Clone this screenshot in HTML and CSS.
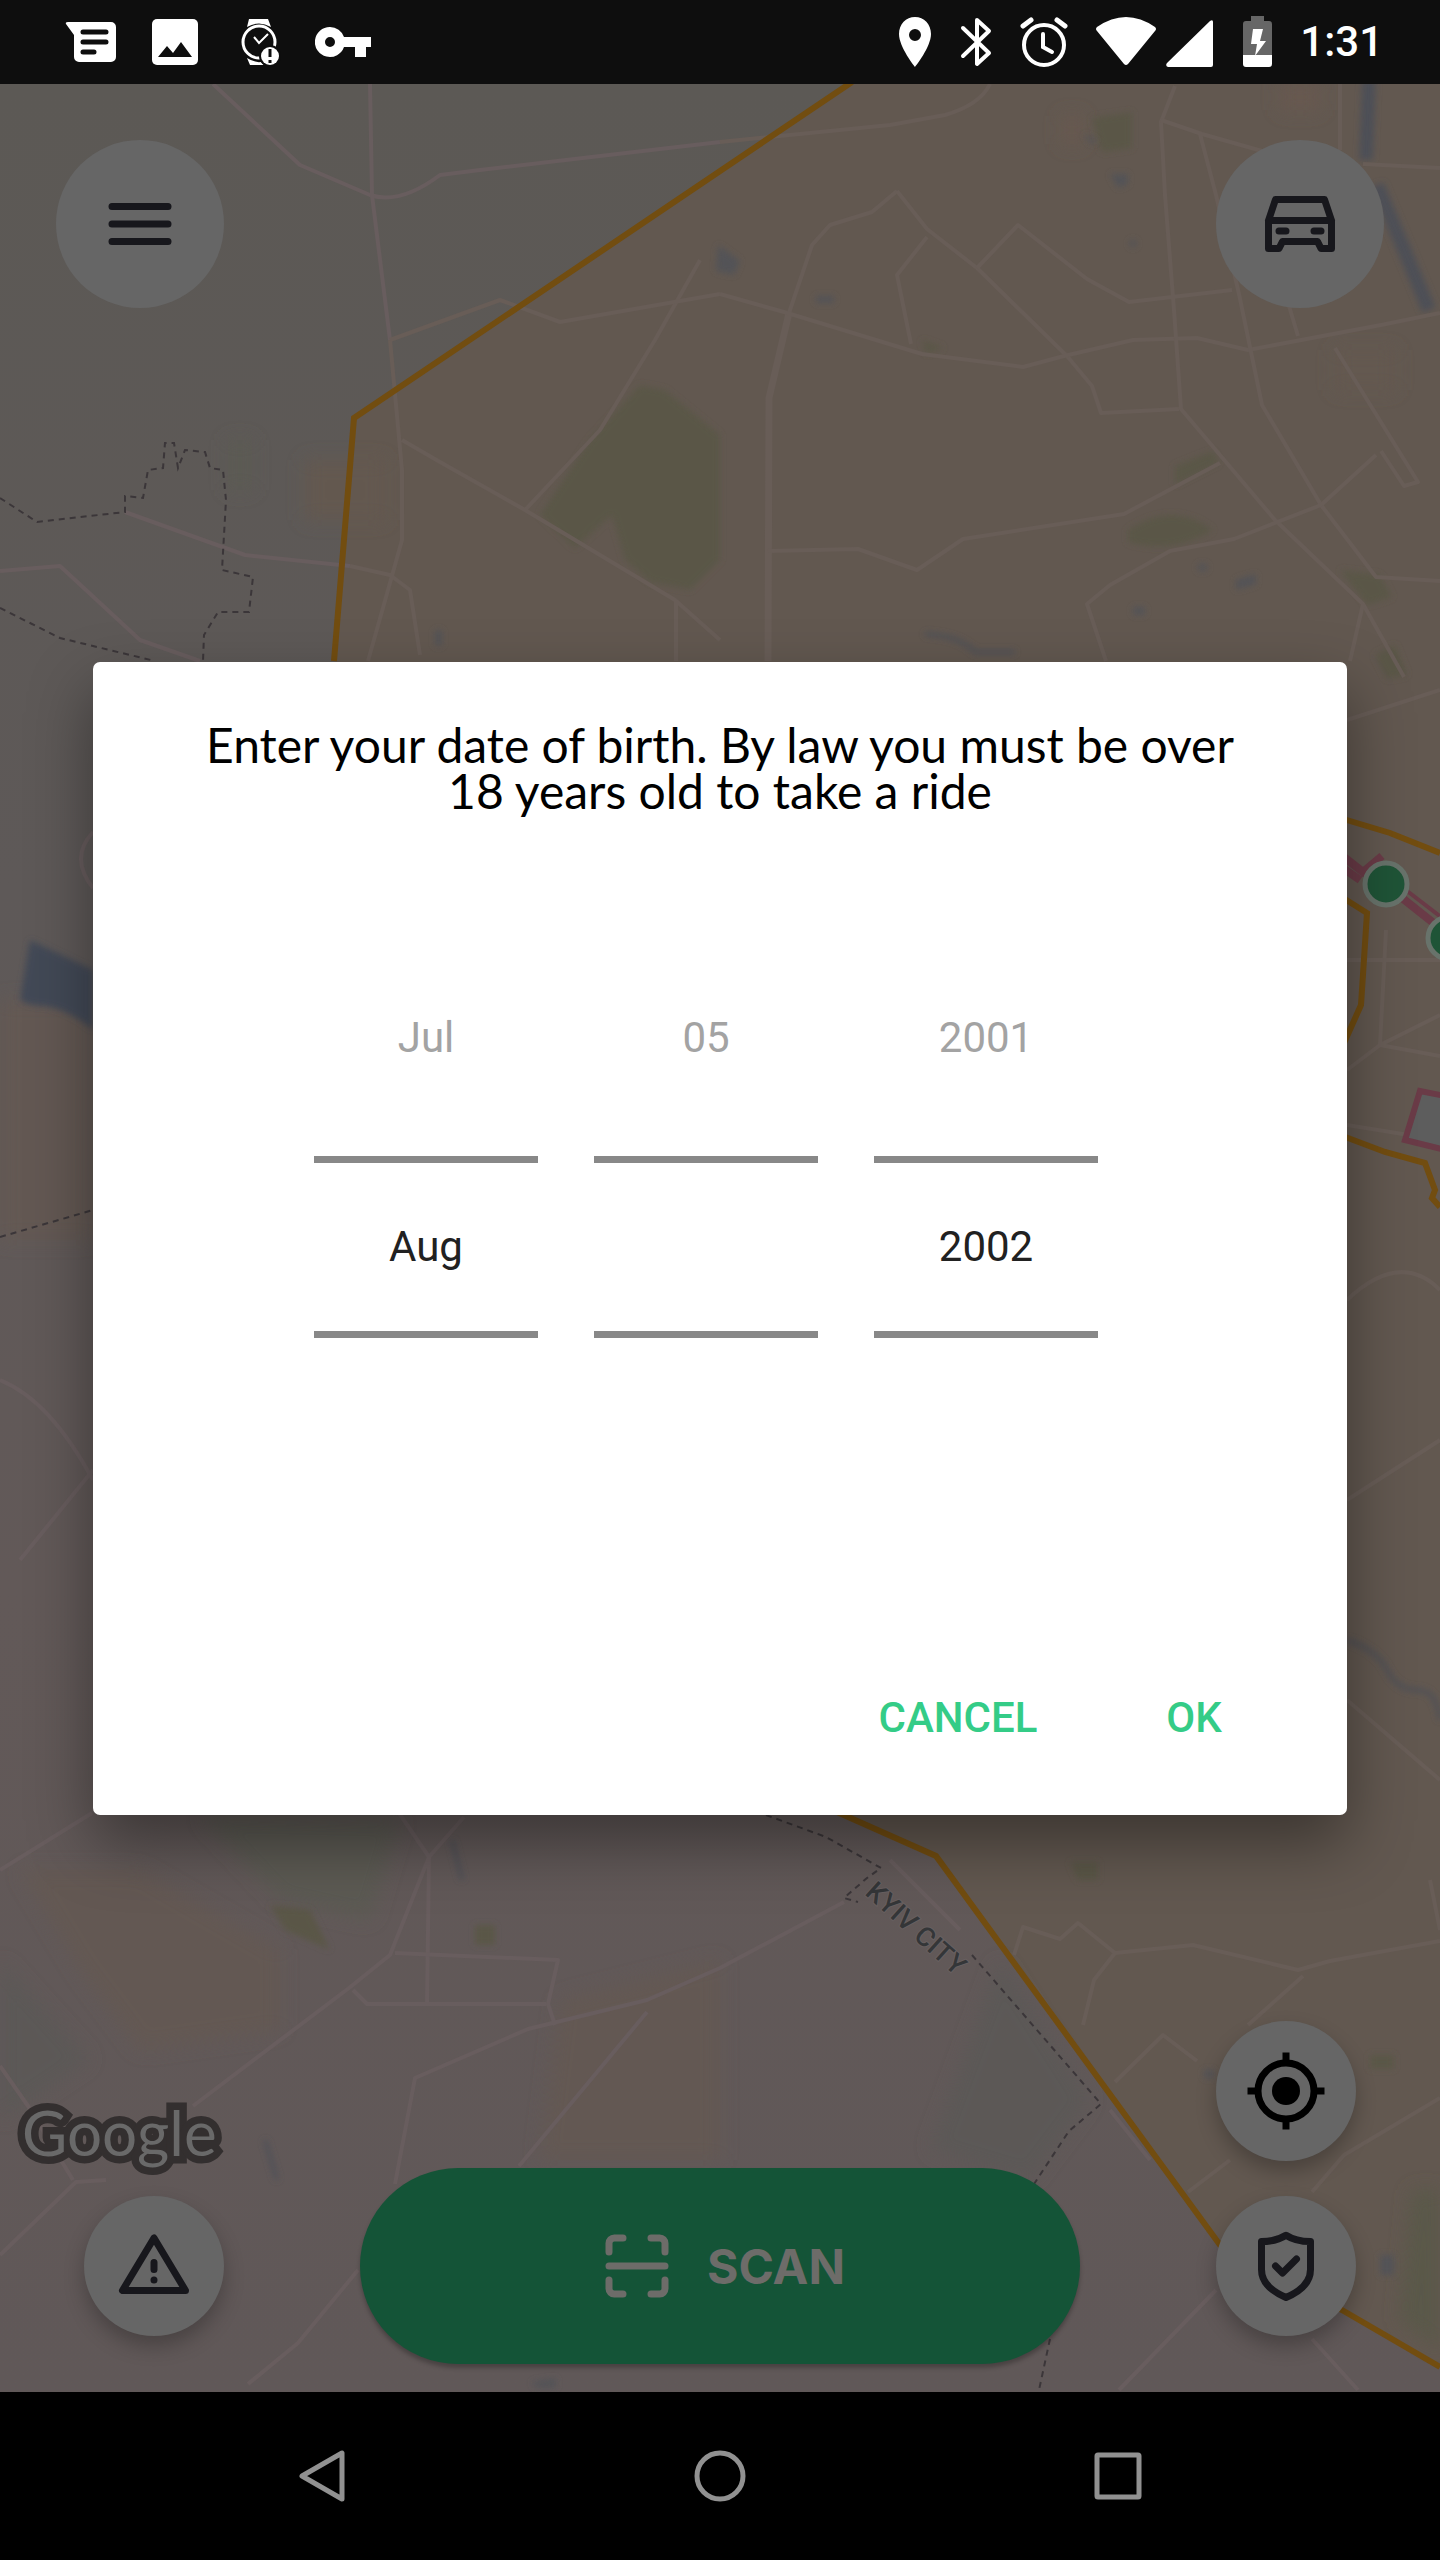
FILE: index.html
```html
<!DOCTYPE html>
<html lang="en">
<head>
<meta charset="utf-8">
<meta name="viewport" content="width=device-width, initial-scale=1">
<title>Date of birth</title>
<link rel="stylesheet" href="styles.css">
</head>
<body>
<div class="screen">
  <header class="status-bar">
    <div class="status-left">
      <svg class="status-icon" viewBox="63 14 56 56" aria-hidden="true"><path fill="#fff" d="M68 22h43a5 5 0 0 1 5 5v30a5 5 0 0 1-5 5H79a5 5 0 0 1-5-5V35l-8-11q-1-2 2-2z"/><path stroke="#0e0e0e" stroke-width="5" stroke-linecap="round" d="M83 32h23M83 42h23M83 52h11"/></svg>
      <svg class="status-icon" viewBox="147 14 56 56" aria-hidden="true"><rect x="152" y="19" width="46" height="46" rx="5" fill="#fff"/><path fill="#0e0e0e" d="M158 57l9-11 6 7 8-11 11 15z"/></svg>
      <svg class="status-icon" viewBox="231 14 56 56" aria-hidden="true"><path fill="#fff" d="M249 19h19l3 8q-12-7-24 0zM247 58q8 5 14 4l3 3h-14z"/><circle cx="259" cy="42" r="16" fill="none" stroke="#fff" stroke-width="3"/><path fill="none" stroke="#fff" stroke-width="2" d="M254 37l5 6 9-9"/><circle cx="270" cy="56" r="11" fill="#0e0e0e"/><circle cx="270" cy="56" r="9" fill="#fff"/><path stroke="#0e0e0e" stroke-width="3" d="M270 49v8M270 60v3"/></svg>
      <svg class="status-icon" viewBox="315 14 56 56" aria-hidden="true"><path fill="#fff" fill-rule="evenodd" d="M330 27a15 15 0 0 1 14 10h27v10h-5v10h-11V47h-11a15 15 0 1 1-14-20zm0 10a5 5 0 1 0 0 10 5 5 0 0 0 0-10z"/></svg>
    </div>
    <div class="status-right">
      <svg width="36" height="52" viewBox="896 16 36 52" aria-hidden="true"><path fill="#fff" fill-rule="evenodd" d="M914 17c-9 0-16 7-16 17 0 13 16 33 16 33s16-20 16-33c0-10-7-17-16-17zm0 12a6 6 0 1 1 0 12 6 6 0 0 1 0-12z"/></svg>
      <svg width="32" height="52" viewBox="961 16 32 52" aria-hidden="true"><path fill="none" stroke="#fff" stroke-width="4" stroke-linejoin="round" stroke-linecap="round" d="M964 28l26 25-12 11V20l12 11-26 25"/></svg>
      <svg width="50" height="52" viewBox="1022 16 50 52" aria-hidden="true"><g fill="none" stroke="#fff" stroke-width="4" stroke-linecap="round"><circle cx="1047" cy="45" r="20"/><path stroke-width="5" d="M1026 26l8-6M1068 26l-8-6"/><path d="M1046 34v13l9 5"/></g></svg>
      <svg width="120" height="52" viewBox="1096 16 120 52" aria-hidden="true"><path fill="#fff" d="M1097 27q29-20 58 0q2 2 0 4l-27 33q-2 2-4 0l-27-33q-2-2 0-4zM1213 22v43q0 2-2 2h-43q-3-1-1-4l43-42q3-2 3 1z"/></svg>
      <svg width="30" height="52" viewBox="1245 16 30 52" aria-hidden="true"><path fill="#666" d="M1253 16h13v5h5q3 0 3 3v31h-29V24q0-3 3-3h5z"/><path fill="#fff" d="M1245 55h29v9q0 3-3 3h-23q-3 0-3-3zM1255 29h10l-3 12h6l-11 15 2-12h-6z"/></svg>
      <time class="clock">1:31</time>
    </div>
  </header>

  <main class="app">
    <svg class="map" viewBox="0 84 1440 2308" preserveAspectRatio="xMidYMid slice" aria-hidden="true">
      <defs>
        <linearGradient id="ground" x1="0" y1="0" x2="0" y2="1"><stop offset="0" stop-color="#5c5955"/><stop offset=".35" stop-color="#5e5958"/><stop offset=".65" stop-color="#625958"/><stop offset="1" stop-color="#605858"/></linearGradient>
        <filter id="soft" x="-50%" y="-50%" width="200%" height="200%"><feGaussianBlur stdDeviation="9"/></filter>
        <filter id="edge"><feGaussianBlur stdDeviation="3"/></filter>
      </defs>
      <rect y="84" width="1440" height="2308" fill="url(#ground)"/>
      <path class="zone" d="M850 84L352 418L334 661L300 1300L600 1700L837 1814L934 1856L1220 2245L1342 2310L1440 2367V84z"/>
      <g filter="url(#soft)">
        <path fill="#645853" d="M20 1870h120l140 80v80l-140 20-60-80zM560 2000l160-40v200H540zM0 1000h93v240H0z"/>
        <path fill="#5c5856" d="M1000 1960l90 140-60 80-100-30zM0 1960l90 100-90 60z"/>
        <path fill="#64594f" d="M305 460h80v60h-80zM1335 350h60v40h-60z"/>
        <path fill="#675850" d="M1280 84h40v26h-40zM1062 116h20v28h-20z"/>
        <path fill="#5a5849" d="M1412 2190h28v160l-40-30z"/>
        <path fill="#5c5a52" d="M200 1815l80 85 90 20 30-100zM228 440h24v50h-24z"/>
      </g>
      <path class="park" filter="url(#edge)" d="M640 385L665 390L720 435V560L690 590L650 582L625 560L612 515L575 548L540 515L590 440z"/>
      <g class="park" filter="url(#edge)"><path d="M1092 118l40-6v36l-30 4zM1175 466l38-15 6 12-44 22zM1128 530q45-30 85 0-40 25-85 12zM1340 570l40 5 12 22-25 8zM1375 655l20-10 12 30-20 4zM922 340l22 8-18 6zM270 1905l40 5 20 40-45-20zM1070 1862h28v18h-20zM1370 2055h24v14h-24zM475 1925h20v20h-20z"/></g>
      <g class="water" filter="url(#edge)">
        <path class="river" d="M1369 80L1366 160"/>
        <path class="river" d="M1377 185L1400 240L1429 310"/>
        <path fill="#434a56" d="M30 940l63 30v60q-24-20-48-24-16 0-25-6z"/>
        <path d="M718 245l22 16-6 14-18-4zM1110 174h18v10l-10 4zM1083 134l14 6-5 4zM816 296h18v7h-18zM1236 580l20-6v10l-20 6zM1133 607h12v8h-12zM1198 564h9v7h-9zM1130 240h6v7h-6zM1204 2070h10v8h-10zM1380 2255h14v20h-14zM532 2382l24-4v10h-20zM435 630h7v16h-7z"/>
        <path class="stream" d="M925 634q35 2 50 18h40M265 2140l12 40M1347 1640q30 10 40 30t30 20 23 30M452 1840l10 40"/>
      </g>
      <g class="roads outer">
        <path d="M213 84L300 165L370 195Q400 205 440 175L480 170L720 142"/>
        <path d="M370 84L372 195L390 340"/>
        <path d="M125 512L245 555L350 566M0 571L60 566L140 640L200 661"/>
        <path d="M0 1870L92 1813M399 1813L429 1857L464 1817M429 1857L390 1955L349 1988L193 2106M429 1857L427 2004"/>
        <path d="M395 1953L558 1960L548 2004L555 2025M353 1990L367 2004H546M395 2184L415 2078L528 2029L647 2000L720 1968L844 1902"/>
        <path d="M647 2012L519 2166M0 2066L28 2106L73 2180M0 2255L76 2182L106 2180M358 2270L298 2343L248 2384"/>
        <path d="M1119 2390L1216 2290M1312 2339L1358 2390M1110 2110L1150 2160M890 1860L960 1930"/>
        <path d="M93 832q-24 26 0 56M0 1380q50 20 93 100M20 1560l73-90"/>
      </g>
      <g class="roads">
        <path d="M720 142L890 125L945 115Q980 105 990 84"/>
        <path d="M390 340L402 470V540L388 590L368 661M402 440L440 462L525 510L675 600L720 640M655 340L600 430L525 510M350 566L390 575L410 590L420 655M655 340L700 260M676 600V661"/>
        <path class="wide" d="M768 661L769 398L789 313"/>
        <path d="M789 313L812 245L830 225L872 212L897 191M390 340L500 300L560 322L720 294"/>
        <path d="M897 191L927 229L977 268L1067 356L1092 386L1101 413L1179 409"/>
        <path d="M927 237L897 275L911 344M720 294L784 312L922 354L1023 367L1064 356L1133 340L1197 338L1248 350L1381 325L1440 313"/>
        <path d="M977 268L1018 225L1087 279L1129 302L1232 290M1175 86L1161 122L1165 195L1174 310L1181 409L1220 455L1275 520L1363 604L1404 677"/>
        <path d="M1161 120L1202 134L1262 151M1200 134L1216 195L1239 294L1262 405L1321 505L1376 577L1440 581"/>
        <path d="M768 551L858 549L917 570L963 539L1124 514L1220 463M1106 661L1087 604L1110 585L1170 551L1234 539L1321 505L1376 455"/>
        <path d="M1335 348L1418 482L1404 486L1381 451M1340 84V150M1363 164L1440 168M1289 306L1298 336M1363 604L1350 661"/>
        <path d="M1115 1953L1193 1945L1298 1970L1330 1961L1440 1941M1083 2025L1094 1980L1115 1953L1078 1923L1060 1939L1023 1927L1014 1955"/>
        <path d="M1115 2082L1163 2035L1197 2061M1248 2025L1303 1976M1312 2192L1344 2155L1440 2098M1188 2192L1230 2160M1430 1880L1440 1930"/>
        <path d="M1386 930L1380 1045L1440 1015M1347 1070L1380 1045L1440 1056M1347 960H1440M1347 1125L1440 1140M1347 720L1440 690M1347 1300Q1400 1250 1440 1290M1347 1500L1440 1440M1347 1700L1440 1780"/>
      </g>
      <g class="border">
        <path d="M0 498L37 522L125 512V496L143 498L148 470L163 468L165 443H174L178 468L185 450L205 452L210 468L223 470L226 500L222 570L253 577L249 612H218L204 635L203 661M0 608L60 638L155 661M0 1237L93 1210"/>
        <path d="M766 1815L826 1837L881 1868L867 1878L844 1898L858 1902M972 1955L1101 2104L1069 2131L1034 2184M1050 2339L1039 2390"/>
      </g>
      <g class="area-line">
        <path d="M852 82L354 418L334 661M837 1812L936 1856L1220 2245L1342 2310L1440 2367"/>
        <path d="M1340 818L1390 833L1440 853M1340 896L1367 913L1361 1005L1340 1052M1340 1135L1385 1152L1425 1163L1435 1190L1432 1198L1440 1207"/>
      </g>
      <g class="closed-line">
        <path d="M1340 854L1363 872L1382 856M1340 866L1360 880M1392 890L1450 936" stroke-width="8"/>
        <path d="M1398 884L1450 924" stroke-width="4"/>
        <path fill="#5d5d5d" d="M1450 1097L1420 1091L1405 1140L1450 1151" stroke-width="6"/>
      </g>
      <g class="pin"><circle cx="1386" cy="884" r="21"/><circle cx="1449" cy="938" r="21"/></g>
      <text class="map-label" transform="translate(864 1894) rotate(42)">KYIV CITY</text>
      <text class="map-logo" x="22" y="2156">Google</text>
    </svg>

    <div class="controls">
      <div class="controls-top">
        <button class="round large" type="button" aria-label="Menu"><svg class="icon" viewBox="0 0 24 24"><path d="M4 7h16M4 12h16M4 17h16"/></svg></button>
        <button class="round large" type="button" aria-label="Cars"><svg class="icon" viewBox="0 0 24 24"><path d="M3 11v8h3l1-2h10l1 2h3v-8zM3 11l2-6h14l2 6M6 14h2M16 14h2"/></svg></button>
      </div>
      <div class="controls-bottom">
        <button class="round raised locate" type="button" aria-label="My location"><svg class="icon black" viewBox="0 0 24 24"><circle cx="12" cy="12" r="8"/><path d="M12 1v3M12 20v3M1 12h3M20 12h3"/><circle class="dot" cx="12" cy="12" r="4"/></svg></button>
        <button class="round raised" type="button" aria-label="Report a problem"><svg class="icon" viewBox="0 0 24 24"><path d="M12 4L3 19h18zM12 11v2M12 16v0"/></svg></button>
        <button class="scan" type="button"><svg class="icon" viewBox="0 0 24 24" aria-hidden="true"><path d="M4 8V5.500A1.500 1.500 0 0 1 5.500 4H8M16 4h2.500A1.500 1.500 0 0 1 20 5.500V8M20 16v2.500a1.500 1.500 0 0 1-1.500 1.500H16M8 20H5.500A1.500 1.500 0 0 1 4 18.500V16M4 12h16"/></svg><span>SCAN</span></button>
        <button class="round raised" type="button" aria-label="Safety"><svg class="icon" viewBox="0 0 24 24"><path d="M12 3.200C10 4.500 7.500 5 5 5v8c0 4 3 6.300 7 8 4-1.700 7-4 7-8V5c-2.500 0-5-.5-7-1.800zM9 12l2 2 4-4"/></svg></button>
      </div>
    </div>

    <div class="overlay">
      <form class="dialog" role="dialog" aria-labelledby="dialog-title">
        <h1 class="dialog-title" id="dialog-title">Enter your date of birth. By law you must be over 18 years old to take a ride</h1>
        <div class="picker">
          <div class="wheel">
            <button class="step" type="button">Jul</button>
            <input class="value" type="text" value="Aug" aria-label="Month">
          </div>
          <div class="wheel">
            <button class="step" type="button">05</button>
            <input class="value" type="text" value="" aria-label="Day">
          </div>
          <div class="wheel">
            <button class="step" type="button">2001</button>
            <input class="value" type="text" value="2002" aria-label="Year">
          </div>
        </div>
        <div class="actions">
          <button class="action" type="button">CANCEL</button>
          <button class="action" type="button">OK</button>
        </div>
      </form>
    </div>
  </main>

  <nav class="nav-bar" aria-label="System">
    <button class="nav-button" type="button" aria-label="Back"><svg class="nav-icon" viewBox="0 0 56 56"><path d="M8 28L48 5v46z"/></svg></button>
    <button class="nav-button" type="button" aria-label="Home"><svg class="nav-icon" viewBox="0 0 56 56"><circle cx="28" cy="28" r="23"/></svg></button>
    <button class="nav-button" type="button" aria-label="Recent apps"><svg class="nav-icon" viewBox="0 0 56 56"><rect x="7" y="7" width="42" height="42" rx="1"/></svg></button>
  </nav>
</div>
</body>
</html>
```
FILE: styles.css
```css
* {
  box-sizing: border-box;
}

body {
  margin: 0;
  background: #000;
  font-family: Roboto, sans-serif;
}

button,
input {
  margin: 0;
  padding: 0;
  border: 0;
  background: none;
  font: inherit;
  color: inherit;
}

svg {
  display: block;
}

.screen {
  display: flex;
  flex-direction: column;
  min-height: 100vh;
}

/* System bars */
.status-bar {
  display: flex;
  justify-content: space-between;
  align-items: center;
  height: 84px;
  padding: 0 57px 0 63px;
  background: #0e0e0e;
  color: #fff;
}

.status-left,
.status-right {
  display: flex;
  align-items: center;
}

.status-left {
  gap: 28px;
}

.status-right {
  gap: 27px;
}

.status-icon {
  width: 56px;
  height: 56px;
}

.clock {
  font-size: 42px;
  font-weight: 500;
  line-height: 52px;
}

.nav-bar {
  display: grid;
  grid-template-columns: repeat(3, 1fr);
  height: 168px;
  padding: 0 123px;
  background: #000;
}

.nav-button {
  display: grid;
  place-items: center;
}

.nav-icon {
  width: 56px;
  height: 56px;
  fill: none;
  stroke: #919191;
  stroke-width: 5;
  stroke-linejoin: round;
}

/* Map */
.app {
  position: relative;
  display: flex;
  flex: 1;
  overflow: hidden;
}

.map {
  position: absolute;
  inset: 0;
  width: 100%;
  height: 100%;
}

.zone {
  fill: #625850;
}

.park {
  fill: #5a5646;
}

.water {
  fill: #525357;
}

.river,
.stream {
  fill: none;
  stroke: #4d4f56;
  stroke-width: 14;
}

.stream {
  stroke-width: 4;
}

.roads {
  fill: none;
  stroke: #685d57;
  stroke-width: 4;
  stroke-linejoin: round;
}

.roads.outer {
  stroke: #685d5e;
}

.roads .wide {
  stroke-width: 7;
}

.border {
  fill: none;
  stroke: #3b3639;
  stroke-width: 2;
  stroke-dasharray: 6 5;
}

.area-line {
  fill: none;
  stroke: #724d10;
  stroke-width: 6;
}

.closed-line {
  fill: none;
  stroke: #6a3b47;
}

.pin {
  fill: #1f5437;
  stroke: #68736b;
  stroke-width: 5;
}

.map-label {
  fill: #343638;
  stroke: #686060;
  stroke-width: 2;
  paint-order: stroke;
  font-size: 27px;
  font-weight: 500;
}

.map-logo {
  fill: #696969;
  stroke: #332f2f;
  stroke-width: 15;
  paint-order: stroke;
  font-family: Lato, sans-serif;
  font-size: 62px;
}

/* Controls over the map */
.controls {
  position: relative;
  display: flex;
  flex: 1;
  flex-direction: column;
  justify-content: space-between;
}

.controls-top {
  display: flex;
  justify-content: space-between;
  padding: 56px;
}

.controls-bottom {
  display: grid;
  grid-template-columns: 140px minmax(0, 720px) 140px;
  justify-content: space-between;
  align-items: center;
  row-gap: 7px;
  padding: 0 84px 28px;
}

.locate {
  grid-column: 3;
}

.round {
  display: grid;
  place-items: center;
  width: 140px;
  height: 140px;
  border-radius: 50%;
  background: #666;
}

.large {
  width: 168px;
  height: 168px;
}

.raised {
  box-shadow: 0 10px 20px rgba(0, 0, 0, 0.25);
}

.icon {
  width: 84px;
  height: 84px;
  fill: none;
  stroke: #17171c;
  stroke-width: 2;
  stroke-linecap: round;
  stroke-linejoin: round;
}

.icon.black {
  stroke: #000;
  stroke-linecap: butt;
}

.icon .dot {
  fill: #000;
  stroke: none;
}

.scan {
  display: flex;
  justify-content: center;
  align-items: center;
  gap: 28px;
  height: 196px;
  border-radius: 98px;
  background: #145437;
  box-shadow: 0 4px 4px rgba(0, 0, 0, 0.25);
  color: #6d6c69;
  font-family: Inter, sans-serif;
  font-size: 48px;
  font-weight: 700;
}

.scan .icon {
  stroke: #6d6c69;
}

/* Date of birth dialog */
.overlay {
  position: absolute;
  inset: 0;
  display: grid;
  align-items: center;
  padding: 0 93px;
}

.dialog {
  padding: 60px 41px 34px;
  border-radius: 7px;
  background: #fff;
  box-shadow: 0 28px 64px rgba(0, 0, 0, 0.4);
}

.dialog-title {
  max-width: 1060px;
  margin: 0 auto 106px;
  color: #000;
  font-family: Lato, sans-serif;
  font-size: 48px;
  font-weight: 400;
  line-height: 46px;
  text-align: center;
}

.picker {
  display: flex;
  justify-content: center;
  gap: 56px;
  padding: 0 28px 317px 0;
}

.wheel {
  width: 224px;
}

.step,
.value {
  display: block;
  width: 100%;
  font-size: 42px;
  text-align: center;
}

.step {
  height: 236px;
  color: #a3a3a3;
}

.value {
  height: 182px;
  border: solid #888;
  border-width: 7px 0;
  color: #212121;
}

.actions {
  display: flex;
  justify-content: flex-end;
  gap: 12px;
}

.action {
  min-width: 224px;
  height: 126px;
  color: #34cc87;
  font-size: 42px;
  font-weight: 500;
}
```
